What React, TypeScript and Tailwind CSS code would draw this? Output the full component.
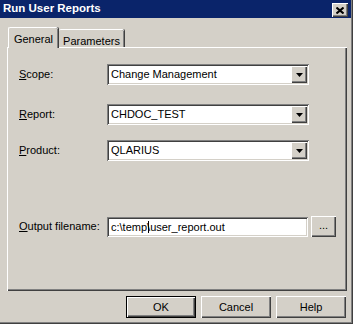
import React from "react";

const sunken =
  "shadow-[inset_1px_1px_0_#808080,inset_-1px_-1px_0_#ffffff,inset_2px_2px_0_#404040,inset_-2px_-2px_0_#d4d0c8]";
const raised =
  "shadow-[inset_1px_1px_0_#ffffff,inset_-1px_-1px_0_#404040,inset_-2px_-2px_0_#808080]";

const Label = ({ k, rest }: { k: string; rest: string }) => (
  <span className="w-[88px] shrink-0">
    <span className="underline underline-offset-[1px]">{k}</span>
    {rest}
  </span>
);

const Combo = ({ value }: { value: string }) => (
  <div
    className={`flex h-[21px] w-[202px] items-center bg-white p-[2px] ${sunken}`}
  >
    <span className="flex-1 pl-[2px] leading-none">{value}</span>
    <div
      className={`flex h-[17px] w-[16px] items-center justify-center bg-[#d4d0c8] ${raised}`}
    >
      <svg width="7" height="4" viewBox="0 0 7 4">
        <polygon points="0,0 7,0 3.5,4" fill="#000" />
      </svg>
    </div>
  </div>
);

const Button = ({ label, primary }: { label: string; primary?: boolean }) => (
  <div
    className={`h-[22px] w-[70px] ${primary ? "border border-black" : ""}`}
  >
    <div
      className={`flex h-full w-full items-center justify-center bg-[#d4d0c8] ${raised}`}
    >
      {label}
    </div>
  </div>
);

export default function App() {
  return (
    <div className="flex h-[324px] w-[353px] flex-col bg-[#d4d0c8] font-['Liberation_Sans',Arial,sans-serif] text-[11px] text-black shadow-[inset_-1px_-1px_0_#404040,inset_-2px_-2px_0_#808080]">
      {/* TITLE BAR */}
      <div className="mr-[2px] flex h-[18px] items-start justify-between bg-[#0a246a] pl-[3px] pr-[3px]">
        <span className="mt-[3px] text-[11.5px] font-bold leading-none text-white">
          Run User Reports
        </span>
        <div
          className={`mt-[3px] flex h-[14px] w-[16px] items-center justify-center bg-[#d4d0c8] ${raised}`}
        >
          <svg width="8" height="7" viewBox="0 0 8 7">
            <path
              d="M0.5 0.5 L7.5 6.5 M7.5 0.5 L0.5 6.5"
              stroke="#000"
              strokeWidth="2"
            />
          </svg>
        </div>
      </div>

      {/* TABS + PANEL */}
      <div className="pl-[7px] pt-[9px]">
        <div className="ml-[1px] flex h-[20px] items-end">
          <div className="relative z-10 -mb-px flex h-[21px] w-[50px] items-start justify-center rounded-tl-[2px] rounded-tr-[2px] border-l border-t border-white bg-[#d4d0c8] pt-[3px] shadow-[inset_-1px_0_0_#808080,1px_0_0_#404040]">
            General
          </div>
          <div className="ml-[1px] flex h-[18px] w-[65px] items-start justify-center rounded-tl-[2px] rounded-tr-[2px] border-t border-white pt-[3px] shadow-[inset_-1px_0_0_#808080,1px_0_0_#404040]">
            Parameters
          </div>
        </div>
        <div className="h-[244px] w-[340px] border-l border-t border-white pl-[11px] pt-[16px] shadow-[inset_-1px_-1px_0_#404040,inset_-2px_-2px_0_#808080]">
          <div className="flex items-center">
            <Label k="S" rest="cope:" />
            <Combo value="Change Management" />
          </div>
          <div className="mt-[19px] flex items-center">
            <Label k="R" rest="eport:" />
            <Combo value="CHDOC_TEST" />
          </div>
          <div className="mt-[15px] flex items-center">
            <Label k="P" rest="roduct:" />
            <Combo value="QLARIUS" />
          </div>
          <div className="mt-[55px] flex items-center">
            <Label k="O" rest="utput filename:" />
            <div
              className={`flex h-[20px] w-[201px] items-center bg-white p-[2px] ${sunken}`}
            >
              <span className="pl-[2px] leading-none">
                c:\temp
                <span className="relative inline-block h-[12px] w-0 align-[-2px]">
                  <span className="absolute left-[1px] top-0 h-[12px] w-[1px] bg-black" />
                </span>
                \user_report.out
              </span>
            </div>
            <div
              className={`ml-[3px] flex h-[21px] w-[25px] items-center justify-center bg-[#d4d0c8] pb-[2px] ${raised}`}
            >
              ...
            </div>
          </div>
        </div>
      </div>

      {/* BUTTONS */}
      <div className="mt-[5px] flex justify-end gap-[5px] pr-[7px]">
        <Button label="OK" primary />
        <Button label="Cancel" />
        <Button label="Help" />
      </div>
    </div>
  );
}
